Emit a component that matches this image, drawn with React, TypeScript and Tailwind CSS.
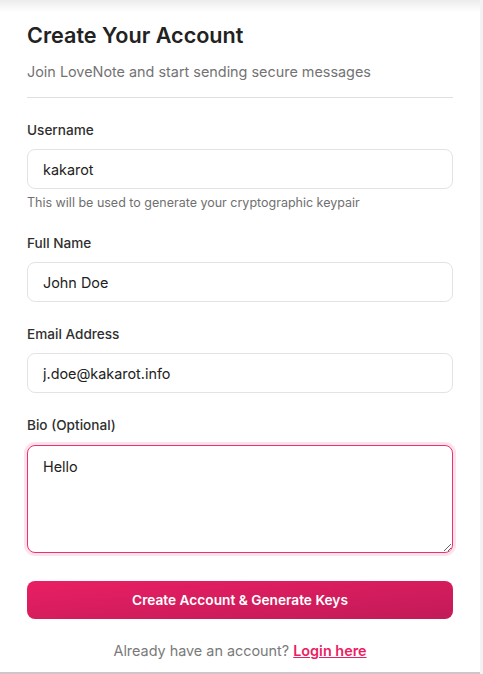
import React from 'react';

const inputClass =
  'w-full h-[40px] rounded-lg border border-[#e3e3e3] bg-white px-[15px] text-[14.4px] text-[#222] outline-none';

const Field: React.FC<{ label: string; value: string; type?: string; hint?: string }> = ({
  label,
  value,
  type = 'text',
  hint,
}) => (
  <div>
    <label className="block text-[13.6px] leading-5 font-medium text-[#2f2f2f] mb-[9px]">{label}</label>
    <input type={type} defaultValue={value} className={inputClass} />
    {hint && <p className="mt-[6px] text-[12.5px] leading-4 text-[#707070]">{hint}</p>}
  </div>
);

export default function App() {
  return (
    <div className="min-h-screen flex bg-[#f3f3f5]" style={{ fontFamily: 'Inter, "Noto Sans", sans-serif' }}>
      <div className="w-[480px] bg-white border-b-2 border-[#cdc5cb]">
        <div className="h-[12px] bg-gradient-to-b from-[#ececec] to-white" />
        <div className="px-[27px] pb-[8px]">
          <h1 className="mt-[7px] text-[21.6px] leading-8 font-semibold text-[#222]">Create Your Account</h1>
          <p className="mt-[9px] text-[14.4px] leading-6 text-[#737373]">
            Join LoveNote and start sending secure messages
          </p>
          <div className="mt-[13px] mb-[22px] h-px bg-[#e0e0e0]" />

          <div className="flex flex-col gap-[22px]">
            <Field label="Username" value="kakarot" hint="This will be used to generate your cryptographic keypair" />
            <Field label="Full Name" value="John Doe" />
            <Field label="Email Address" type="email" value="j.doe@kakarot.info" />
            <div>
              <label className="block text-[13.6px] leading-5 font-medium text-[#2f2f2f] mb-[10px]">Bio (Optional)</label>
              <textarea
                defaultValue="Hello"
                className="block w-full h-[108px] rounded-lg border border-[#f0306c] bg-white px-[15px] py-[10px] text-[14.4px] text-[#222] outline-none ring-[3px] ring-[#fde4ec]"
              />
            </div>
          </div>

          <button className="mt-[28px] w-full h-[38px] rounded-lg bg-gradient-to-br from-[#e91f63] to-[#c21a58] text-white text-[13.7px] font-semibold">
            Create Account &amp; Generate Keys
          </button>

          <p className="mt-[20px] text-center text-[14.4px] leading-6 text-[#7a7a7a]">
            Already have an account?{' '}
            <a href="#" className="font-semibold text-[#e91e63] underline">
              Login here
            </a>
          </p>
        </div>
      </div>
      <div className="flex-1" />
    </div>
  );
}
